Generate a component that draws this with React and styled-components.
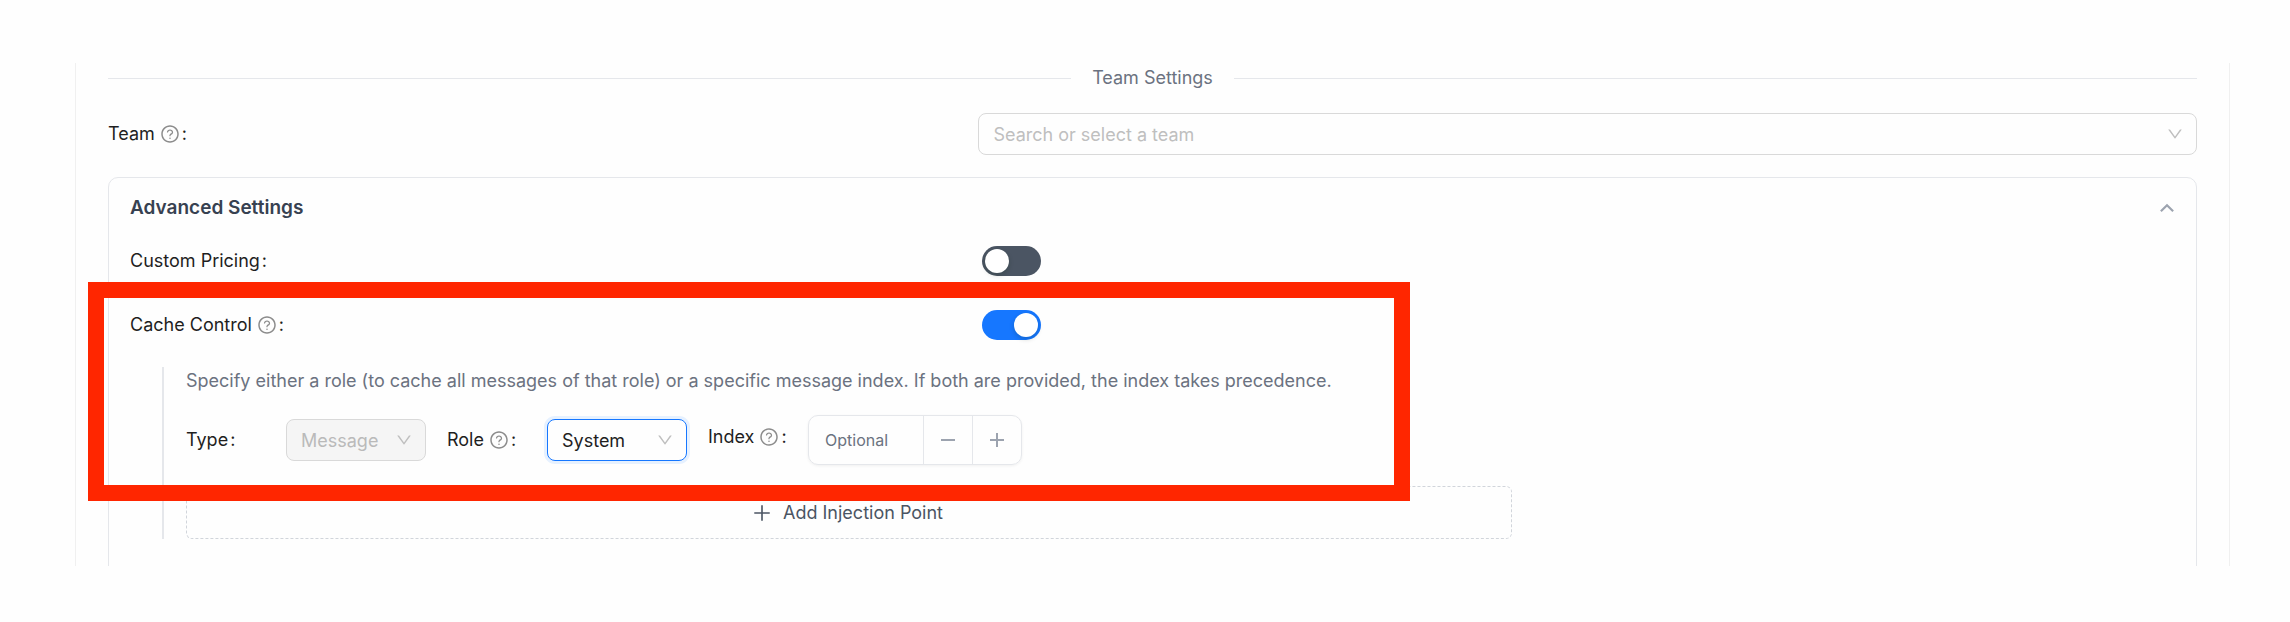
import React from "react";
import styled, { createGlobalStyle } from "styled-components";
import { AiOutlineQuestionCircle, AiOutlineDown, AiOutlinePlus } from "react-icons/ai";
import { RiArrowUpSLine } from "react-icons/ri";

const GlobalStyle = createGlobalStyle`
  *, *::before, *::after { box-sizing: border-box; }
  body {
    margin: 0;
    background: #fefefe;
    color: #1f1f1f;
    font-family: Inter, "Liberation Sans", sans-serif;
    font-size: 18px;
    line-height: 28px;
  }
  button, input, select { font: inherit; color: inherit; margin: 0; }
`;

const Page = styled.main`
  padding: 61px 60px 56px 75px;
`;

const Modal = styled.section`
  height: 505px;
  overflow: hidden;
  padding: 3px 32px 0;
  border: solid #f0f0f0;
  border-width: 0 1px;
  border-image: linear-gradient(transparent 3px, #f0f0f0 3px) 1;
`;

const Divider = styled.h2`
  display: flex;
  align-items: center;
  gap: 21px;
  margin: 0;
  color: #6b7280;
  font-size: 18px;
  font-weight: 400;
  white-space: nowrap;

  &::before, &::after {
    content: "";
    flex: 1;
    height: 1px;
    background: #e5e7eb;
  }
`;

const FormRow = styled.div`
  display: grid;
  grid-template-columns: 10fr 14fr;
  align-items: center;
  min-height: ${(p) => p.$height}px;
`;

const LabelText = styled.label`
  display: inline-flex;
  align-items: center;
  white-space: nowrap;
`;

const HelpIcon = styled(AiOutlineQuestionCircle)`
  width: 20px;
  height: 20px;
  margin-left: 5px;
  color: #8c8c8c;
`;

const Colon = styled.span`
  margin-left: 2px;
`;

const TeamRow = styled(FormRow)`
  margin: 21px 0 22px;
`;

const SelectBox = styled.div`
  display: grid;
  align-items: center;
  width: ${(p) => p.$width || "100%"};

  > * { grid-area: 1 / 1; }
  > svg {
    justify-self: end;
    width: 18px;
    height: 18px;
    margin-right: 13px;
    color: #bfbfbf;
    pointer-events: none;
  }
`;

const Select = styled.select`
  appearance: none;
  width: 100%;
  height: 42px;
  padding: 1px 38px 0 14px;
  border: 1px solid ${(p) => (p.$active ? "#1677ff" : "#d9d9d9")};
  border-radius: 8px;
  background: #fefefe;
  color: ${(p) => (p.$placeholder ? "#bfbfbf" : "#1f1f1f")};
  outline: 0;
  opacity: 1;
  box-shadow: ${(p) => (p.$active ? "0 0 0 3px #e6f1ff" : "none")};

  &:disabled {
    background: #f5f5f5;
    color: #bababa;
  }
`;

const Card = styled.section`
  height: 420px;
  border: 1px solid #e5e7eb;
  border-radius: 10px;
`;

const CardHeader = styled.button`
  display: flex;
  align-items: center;
  justify-content: space-between;
  width: 100%;
  height: 60px;
  padding: 0 16px 0 21px;
  border: 0;
  background: none;
  color: #374151;
  font-size: 19px;
  font-weight: 600;

  svg {
    width: 26px;
    height: 26px;
    color: #9ca3af;
  }
`;

const CardBody = styled.div`
  padding: 0 22px 0 21px;
`;

const Switch = styled.input`
  appearance: none;
  display: block;
  width: 59px;
  height: 30px;
  padding: 3px;
  border-radius: 15px;
  background: #4b5563;

  &::before {
    content: "";
    display: block;
    width: 24px;
    height: 24px;
    border-radius: 50%;
    background: #fff;
    box-shadow: 0 2px 5px rgba(0, 35, 11, 0.2);
  }
  &:checked { background: #1677ff; }
  &:checked::before { margin-left: 29px; }
`;

const CacheSection = styled.div`
  position: relative;
  margin-top: 11px;
`;

const HighlightFrame = styled.div`
  position: absolute;
  top: -13px;
  left: -42px;
  width: 1322px;
  height: 219px;
  border: 16px solid #ff2600;
  pointer-events: none;
`;

const Injection = styled.div`
  max-width: 1350px;
  margin: 12px 0 0 32px;
  padding-left: 22px;
  border-left: 2px solid #e5e7eb;
`;

const Note = styled.p`
  margin: 0;
  color: #6b7280;
`;

const Fields = styled.div`
  display: flex;
  align-items: center;
  gap: 21px;
  margin: 20px 0 21px;
`;

const Field = styled.div`
  display: flex;
  align-items: ${(p) => (p.$top ? "flex-start" : "center")};
`;

const FieldLabel = styled(LabelText)`
  width: 100px;
  height: 44px;
`;

const NumberBox = styled.div`
  display: flex;
  width: 214px;
  height: 50px;
  overflow: hidden;
  border: 1px solid #e5e7eb;
  border-radius: 10px;
  box-shadow: 0 1px 3px rgba(0, 0, 0, 0.06);
`;

const NumberInput = styled.input`
  flex: 1;
  min-width: 0;
  padding: 0 16px;
  border: 0;
  outline: 0;
  background: none;
  font-size: 16px;

  &::placeholder { color: #6b7280; opacity: 1; }
`;

const StepButton = styled.button`
  display: grid;
  place-items: center;
  width: 49px;
  padding: 0;
  border: 0;
  border-left: 1px solid #e5e7eb;
  background: none;
  color: #9ca3af;
`;

const AddButton = styled.button`
  display: flex;
  align-items: center;
  justify-content: center;
  gap: 10px;
  width: 100%;
  height: 53px;
  padding: 0 8px 0 4px;
  border: 1px dashed #d1d5db;
  border-radius: 6px;
  background: none;
  color: #4b5563;

  svg { width: 22px; height: 22px; }
`;

function Label({ as: Base = LabelText, htmlFor, help, children }) {
  return (
    <Base htmlFor={htmlFor}>
      {children}
      {help && <HelpIcon aria-hidden="true" />}
      <Colon>:</Colon>
    </Base>
  );
}

function StepIcon({ plus }) {
  return (
    <svg width="18" height="18" viewBox="0 0 18 18" fill="none" stroke="currentColor" strokeWidth="2" aria-hidden="true">
      <path d={plus ? "M2 9H16M9 2V16" : "M2 9H16"} />
    </svg>
  );
}

export default function App() {
  return (
    <>
      <GlobalStyle />
      <Page>
        <Modal>
          <Divider>Team Settings</Divider>
          <TeamRow $height={42}>
            <Label htmlFor="team" help>Team</Label>
            <SelectBox>
              <Select id="team" $placeholder defaultValue="">
                <option value="">Search or select a team</option>
              </Select>
              <AiOutlineDown />
            </SelectBox>
          </TeamRow>

          <Card>
            <CardHeader type="button" aria-expanded="true">
              Advanced Settings
              <RiArrowUpSLine />
            </CardHeader>
            <CardBody>
              <FormRow $height={46}>
                <Label htmlFor="pricing">Custom Pricing</Label>
                <Switch id="pricing" type="checkbox" role="switch" />
              </FormRow>

              <CacheSection>
                <FormRow $height={60}>
                  <Label htmlFor="cache" help>Cache Control</Label>
                  <Switch id="cache" type="checkbox" role="switch" defaultChecked />
                </FormRow>
                <Injection>
                  <Note>
                    Specify either a role (to cache all messages of that role) or a specific message index. If both are
                    provided, the index takes precedence.
                  </Note>
                  <Fields>
                    <Field>
                      <Label as={FieldLabel} htmlFor="type">Type</Label>
                      <SelectBox $width="140px">
                        <Select id="type" disabled defaultValue="message">
                          <option value="message">Message</option>
                        </Select>
                        <AiOutlineDown />
                      </SelectBox>
                    </Field>
                    <Field>
                      <Label as={FieldLabel} htmlFor="role" help>Role</Label>
                      <SelectBox $width="140px">
                        <Select id="role" $active defaultValue="system">
                          <option value="system">System</option>
                          <option value="user">User</option>
                          <option value="assistant">Assistant</option>
                        </Select>
                        <AiOutlineDown />
                      </SelectBox>
                    </Field>
                    <Field $top>
                      <Label as={FieldLabel} htmlFor="index" help>Index</Label>
                      <NumberBox>
                        <NumberInput id="index" type="text" inputMode="numeric" placeholder="Optional" />
                        <StepButton type="button" aria-label="Decrease"><StepIcon /></StepButton>
                        <StepButton type="button" aria-label="Increase"><StepIcon plus /></StepButton>
                      </NumberBox>
                    </Field>
                  </Fields>
                  <AddButton type="button">
                    <AiOutlinePlus />
                    Add Injection Point
                  </AddButton>
                </Injection>
                <HighlightFrame />
              </CacheSection>
            </CardBody>
          </Card>
        </Modal>
      </Page>
    </>
  );
}
